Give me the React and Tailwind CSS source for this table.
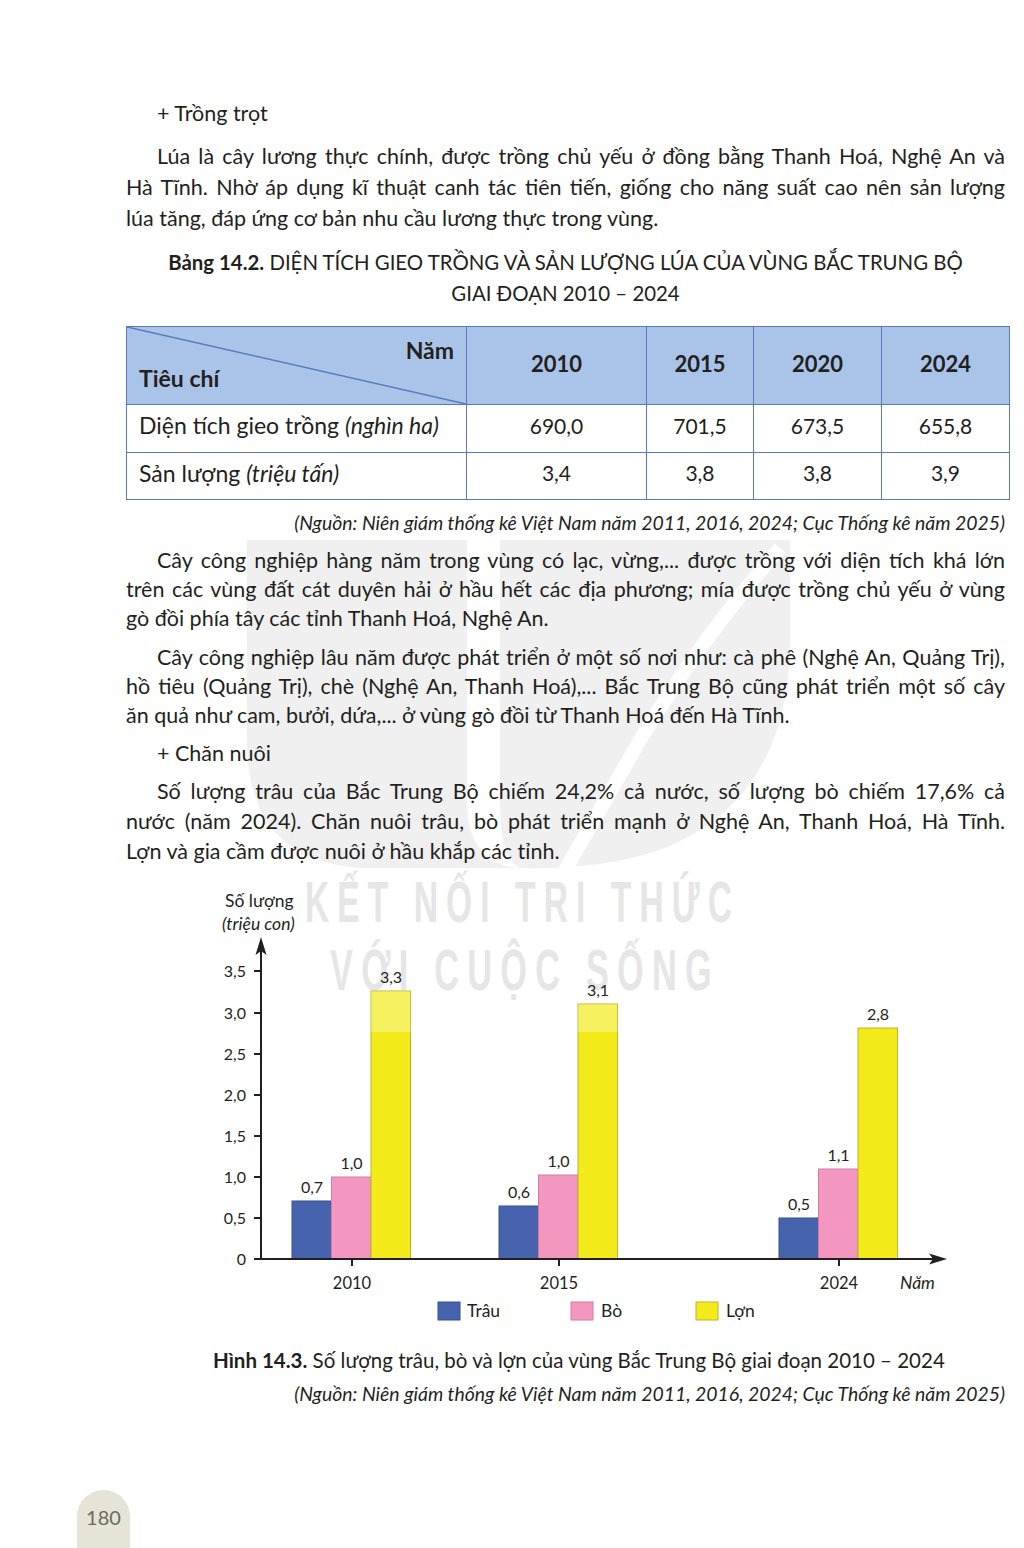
import React from "react";

const Line = ({ children, cls }) => (
  <div className={"whitespace-nowrap text-justify [text-align-last:justify] " + cls}>{children}</div>
);
const Last = ({ children, cls }) => <div className={"whitespace-nowrap " + cls}>{children}</div>;

const bars = [
  { x: 292, v: "0,7", top: 1200, c: "t" },
  { x: 331.5, v: "1,0", top: 1176, c: "b" },
  { x: 371, v: "3,3", top: 990, c: "l", fade: true },
  { x: 499, v: "0,6", top: 1205, c: "t" },
  { x: 538.5, v: "1,0", top: 1174, c: "b" },
  { x: 578, v: "3,1", top: 1003, c: "l", fade: true },
  { x: 779, v: "0,5", top: 1217, c: "t" },
  { x: 818.5, v: "1,1", top: 1168, c: "b" },
  { x: 858, v: "2,8", top: 1027, c: "l" },
];
const fills = {
  t: ["#4763ae", "#34508f"],
  b: ["#f397c1", "#d67aa5"],
  l: ["#f3eb1a", "#bdb42c"],
};
const ticks = [
  ["3,5", 970],
  ["3,0", 1012],
  ["2,5", 1053],
  ["2,0", 1094],
  ["1,5", 1135],
  ["1,0", 1176],
  ["0,5", 1217],
  ["0", 1258],
];

function Chart() {
  return (
    <svg width="1024" height="480" viewBox="0 865 1024 480" className="block">
      <g fontFamily="Lato, sans-serif" fill="#231f20">
        <text x="225" y="906" fontSize="17.5">Số lượng</text>
        <text x="222" y="929" fontSize="17.5" fontStyle="italic">(triệu con)</text>
        {ticks.map(([t, y]) => (
          <g key={t}>
            <text x="246" y={y + 6} fontSize="16" textAnchor="end">{t}</text>
            <line x1="254" y1={y} x2="261" y2={y} stroke="#231f20" strokeWidth="2" />
          </g>
        ))}
        {bars.map((b, i) => (
          <g key={i}>
            <rect
              x={b.x}
              y={b.top}
              width="39.5"
              height={1258 - b.top}
              fill={fills[b.c][0]}
              stroke={fills[b.c][1]}
              strokeWidth="1"
            />
            {b.fade && (
              <rect x={b.x} y={b.top} width="39.5" height={1031 - b.top} fill="#ffffff" opacity="0.3" />
            )}
            <text x={b.x + 20} y={b.top - 8} fontSize="16" textAnchor="middle">{b.v}</text>
          </g>
        ))}
        <line x1="261" y1="1259" x2="261" y2="945" stroke="#231f20" strokeWidth="2" />
        <path d="M261,936 L255.5,954 L261,950 L266.5,954 Z" fill="#231f20" />
        <line x1="260" y1="1258" x2="938" y2="1258" stroke="#231f20" strokeWidth="2" />
        <path d="M947,1258 L929,1252.5 L933,1258 L929,1263.5 Z" fill="#231f20" />
        {[
          ["2010", 352],
          ["2015", 559],
          ["2024", 839],
        ].map(([t, x]) => (
          <g key={t}>
            <line x1={x} y1="1258" x2={x} y2="1265" stroke="#231f20" strokeWidth="2" />
            <text x={x} y="1288" fontSize="16.5" textAnchor="middle">{t}</text>
          </g>
        ))}
        <text x="900" y="1288" fontSize="17.5" fontStyle="italic">Năm</text>
        <rect x="438" y="1301" width="22" height="18" fill="#4763ae" stroke="#34508f" />
        <text x="467" y="1316" fontSize="17.5">Trâu</text>
        <rect x="571" y="1301" width="22" height="18" fill="#f397c1" stroke="#d67aa5" />
        <text x="601" y="1316" fontSize="17.5">Bò</text>
        <rect x="696" y="1301" width="22" height="18" fill="#f3eb1a" stroke="#bdb42c" />
        <text x="726" y="1316" fontSize="17.5">Lợn</text>
      </g>
    </svg>
  );
}

const cell = "border-[1.5px] border-[#5b79bf]";

export default function App() {
  return (
    <div className="relative w-[1024px] h-[1548px] bg-white overflow-hidden text-[#231f20] [font-family:Lato,'Noto_Sans',sans-serif]">
      {/* faint logo watermark behind the content */}
      <svg className="absolute left-0 top-0 pointer-events-none" width="1024" height="1548" viewBox="0 0 1024 1548">
        <path d="M247,540 H467 V800 Q467,865 520,868 H360 Q247,860 247,740 Z" fill="#f0f0f0" />
        <path d="M500,540 H790 V640 Q790,800 660,850 Q600,870 520,868 Q500,860 500,800 Z" fill="#f0f0f0" />
        <path d="M780,548 Q700,640 640,740 Q600,810 565,870" stroke="#ffffff" strokeWidth="14" fill="none" />
        <g fontFamily="'Liberation Sans', sans-serif" fontWeight="700" fill="#e6e6e6" fontSize="58">
          <text x="305" y="922" textLength="435" lengthAdjust="spacingAndGlyphs" letterSpacing="14">KẾT NỐI TRI THỨC</text>
          <text x="330" y="990" textLength="390" lengthAdjust="spacingAndGlyphs" letterSpacing="14">VỚI CUỘC SỐNG</text>
        </g>
      </svg>

      <div className="relative flex flex-col text-[21.5px]">
        <div className="ml-[157px] mt-[98px] leading-[31px]">+ Trồng trọt</div>

        <div className="ml-[126px] w-[879px] mt-[12px] leading-[31px]">
          <Line cls="pl-[31px]">Lúa là cây lương thực chính, được trồng chủ yếu ở đồng bằng Thanh Hoá, Nghệ An và</Line>
          <Line cls="">Hà Tĩnh. Nhờ áp dụng kĩ thuật canh tác tiên tiến, giống cho năng suất cao nên sản lượng</Line>
          <Last cls="">lúa tăng, đáp ứng cơ bản nhu cầu lương thực trong vùng.</Last>
        </div>

        <div className="ml-[126px] w-[879px] mt-[13px] text-center text-[20.4px] leading-[31px]">
          <div className="whitespace-nowrap">
            <span className="font-bold">Bảng 14.2.</span> DIỆN TÍCH GIEO TRỒNG VÀ SẢN LƯỢNG LÚA CỦA VÙNG BẮC TRUNG BỘ
          </div>
          <div>GIAI ĐOẠN 2010 – 2024</div>
        </div>

        <table className="ml-[126px] mt-[17px] w-[883px] border-collapse table-fixed text-[21px]">
          <colgroup>
            <col className="w-[340px]" />
            <col className="w-[180px]" />
            <col className="w-[107px]" />
            <col className="w-[128px]" />
            <col className="w-[128px]" />
          </colgroup>
          <thead>
            <tr className="h-[77px] bg-[#aac4e9]">
              <th className={cell + " relative p-0 font-bold text-[23px]"}>
                <svg className="absolute inset-0 w-full h-full" viewBox="0 0 100 100" preserveAspectRatio="none">
                  <line x1="0" y1="0" x2="100" y2="100" stroke="#5b79bf" strokeWidth="1.5" vectorEffect="non-scaling-stroke" />
                </svg>
                <div className="relative flex flex-col h-[77px] px-[12px] pt-[9px] pb-[13px] justify-between leading-[28px]">
                  <div className="self-end">Năm</div>
                  <div className="self-start">Tiêu chí</div>
                </div>
              </th>
              <th className={cell + " font-bold text-[22px] pb-[4px]"}>2010</th>
              <th className={cell + " font-bold text-[22px] pb-[4px]"}>2015</th>
              <th className={cell + " font-bold text-[22px] pb-[4px]"}>2020</th>
              <th className={cell + " font-bold text-[22px] pb-[4px]"}>2024</th>
            </tr>
          </thead>
          <tbody>
            <tr className="h-[48px]">
              <td className={cell + " pl-[12px] pb-[6px] whitespace-nowrap text-[23px]"}>
                Diện tích gieo trồng <i>(nghìn ha)</i>
              </td>
              <td className={cell + " text-center pb-[6px]"}>690,0</td>
              <td className={cell + " text-center pb-[6px]"}>701,5</td>
              <td className={cell + " text-center pb-[6px]"}>673,5</td>
              <td className={cell + " text-center pb-[6px]"}>655,8</td>
            </tr>
            <tr className="h-[47px]">
              <td className={cell + " pl-[12px] pb-[6px] whitespace-nowrap text-[23px]"}>
                Sản lượng <i>(triệu tấn)</i>
              </td>
              <td className={cell + " text-center pb-[6px]"}>3,4</td>
              <td className={cell + " text-center pb-[6px]"}>3,8</td>
              <td className={cell + " text-center pb-[6px]"}>3,8</td>
              <td className={cell + " text-center pb-[6px]"}>3,9</td>
            </tr>
          </tbody>
        </table>

        <div className="ml-[126px] w-[879px] mt-[10px] text-right italic text-[19.4px] leading-[26px] whitespace-nowrap">
          (Nguồn: Niên giám thống kê Việt Nam năm 2011, 2016, 2024; Cục Thống kê năm 2025)
        </div>

        <div className="ml-[126px] w-[879px] mt-[10px] leading-[29px]">
          <Line cls="pl-[31px]">Cây công nghiệp hàng năm trong vùng có lạc, vừng,... được trồng với diện tích khá lớn</Line>
          <Line cls="">trên các vùng đất cát duyên hải ở hầu hết các địa phương; mía được trồng chủ yếu ở vùng</Line>
          <Last cls="">gò đồi phía tây các tỉnh Thanh Hoá, Nghệ An.</Last>
        </div>

        <div className="ml-[126px] w-[879px] mt-[10px] leading-[29px]">
          <Line cls="pl-[31px]">Cây công nghiệp lâu năm được phát triển ở một số nơi như: cà phê (Nghệ An, Quảng Trị),</Line>
          <Line cls="">hồ tiêu (Quảng Trị), chè (Nghệ An, Thanh Hoá),... Bắc Trung Bộ cũng phát triển một số cây</Line>
          <Last cls="">ăn quả như cam, bưởi, dứa,... ở vùng gò đồi từ Thanh Hoá đến Hà Tĩnh.</Last>
        </div>

        <div className="ml-[157px] mt-[8px] leading-[30px]">+ Chăn nuôi</div>

        <div className="ml-[126px] w-[879px] mt-[8px] leading-[30px]">
          <Line cls="pl-[31px]">Số lượng trâu của Bắc Trung Bộ chiếm 24,2% cả nước, số lượng bò chiếm 17,6% cả</Line>
          <Line cls="">nước (năm 2024). Chăn nuôi trâu, bò phát triển mạnh ở Nghệ An, Thanh Hoá, Hà Tĩnh.</Line>
          <Last cls="">Lợn và gia cầm được nuôi ở hầu khắp các tỉnh.</Last>
        </div>

        <Chart />

        <div className="ml-[213px] text-[20.5px] leading-[28px] whitespace-nowrap">
          <span className="font-bold">Hình 14.3.</span> Số lượng trâu, bò và lợn của vùng Bắc Trung Bộ giai đoạn 2010 – 2024
        </div>
        <div className="ml-[126px] w-[879px] mt-[6px] text-right italic text-[19.4px] leading-[28px] whitespace-nowrap">
          (Nguồn: Niên giám thống kê Việt Nam năm 2011, 2016, 2024; Cục Thống kê năm 2025)
        </div>
      </div>

      {/* page number tab */}
      <div className="absolute left-[77px] top-[1490px] w-[53px] h-[58px] rounded-t-[27px] bg-[#e6e4d6] flex justify-center pt-[14px] text-[20px] leading-[26px] text-[#6b6b60]">
        180
      </div>
    </div>
  );
}
